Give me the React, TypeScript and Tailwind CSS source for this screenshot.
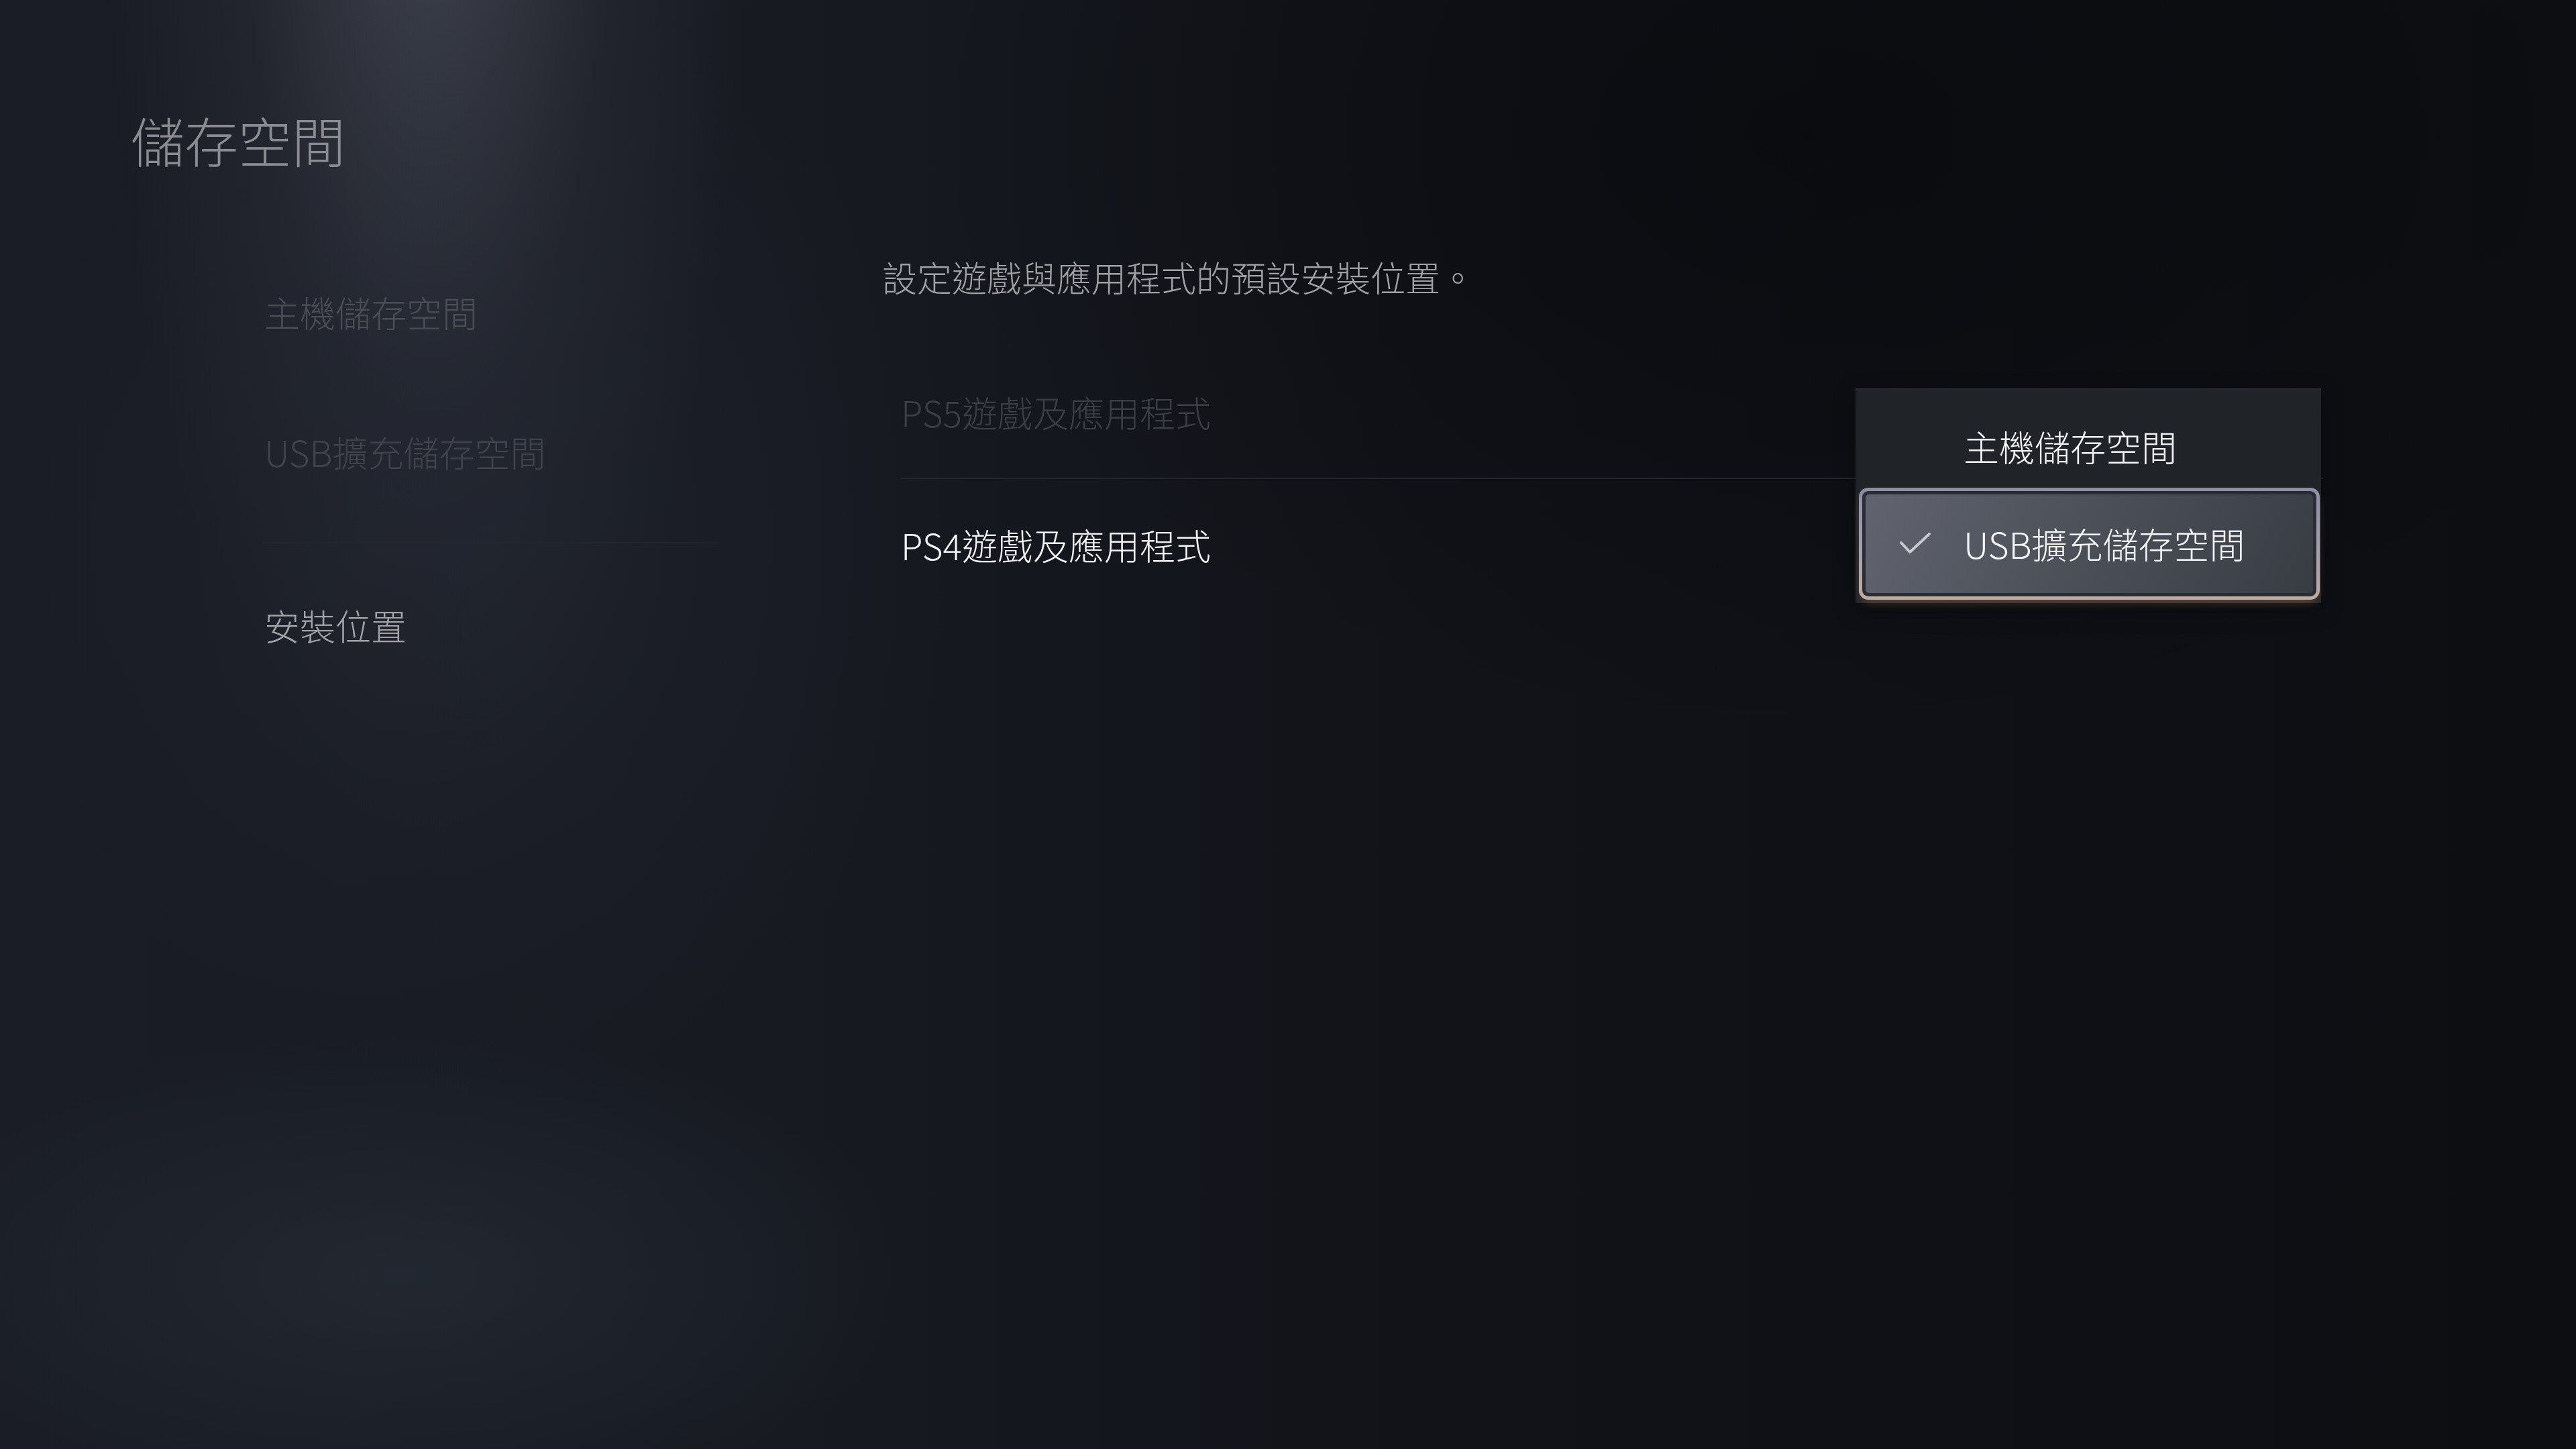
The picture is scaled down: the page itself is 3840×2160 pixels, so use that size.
import React from "react";

const FONT = "font-['Noto_Sans_CJK_TC','Noto_Sans_CJK_SC',sans-serif]";

function Check() {
  return (
    <svg width="48" height="36" viewBox="0 0 48 36" fill="none">
      <polyline
        points="3,16 16,30 45,3"
        stroke="#c9cacf"
        strokeWidth="4"
        strokeLinecap="round"
        strokeLinejoin="round"
      />
    </svg>
  );
}

function Backdrop() {
  return (
    <div className="pointer-events-none absolute inset-0">
      <div className="absolute inset-0 bg-[linear-gradient(90deg,#1a1d25_0%,#171a21_30%,#111319_55%,#0c0e12_100%)]" />
      {/* spotlight falling from the top left */}
      <div className="absolute inset-0 bg-[radial-gradient(ellipse_620px_1900px_at_640px_-240px,rgba(120,124,138,0.42)_0%,rgba(70,74,88,0.2)_45%,rgba(0,0,0,0)_78%)]" />
      <div className="absolute inset-0 bg-[radial-gradient(ellipse_1000px_1200px_at_720px_800px,rgba(40,44,56,0.35)_0%,rgba(0,0,0,0)_70%)]" />
      {/* dark wedge on the upper right */}
      <div className="absolute inset-0 bg-[radial-gradient(ellipse_1900px_1300px_at_2700px_200px,rgba(6,7,10,0.55)_0%,rgba(0,0,0,0)_70%)]" />
      {/* haze near the bottom left */}
      <div className="absolute inset-0 bg-[radial-gradient(ellipse_1100px_520px_at_600px_1900px,rgba(42,50,60,0.55)_0%,rgba(0,0,0,0)_70%)]" />
    </div>
  );
}

function NavItem({ label, tone }: { label: string; tone: string }) {
  return (
    <div className={`flex h-[208px] items-center pl-[3px] text-[53px] leading-none font-light ${tone}`}>
      {label}
    </div>
  );
}

export default function App() {
  return (
    <div className={`relative h-[2160px] w-[3840px] overflow-hidden bg-[#12151b] ${FONT}`}>
      <Backdrop />
      <div className="relative">
        <h1 className="pl-[195px] pt-[167px] text-[80px] leading-none font-light text-[#8b8c91]">
          儲存空間
        </h1>

        <div className="flex">
          {/* left section menu */}
          <nav className="ml-[391px] mt-[114px] w-[681px]">
            <NavItem label="主機儲存空間" tone="text-[#4a4d54]" />
            <NavItem label="USB擴充儲存空間" tone="text-[#40434a]" />
            <div className="mt-[31px] h-[2px] bg-[#23262d]" />
            <div className="mt-[18px]">
              <NavItem label="安裝位置" tone="text-[#a2a3a7]" />
            </div>
          </nav>

          {/* settings content */}
          <section className="ml-[243px] mt-[140px] w-[2148px]">
            <p className="text-[52px] leading-none font-light text-[#a0a1a5]">
              設定遊戲與應用程式的預設安裝位置。
            </p>

            <div className="relative ml-[28px] mt-[77px]">
              <div className="flex h-[196px] items-center text-[53px] leading-none font-light text-[#3b3e45]">
                PS5遊戲及應用程式
              </div>
              <div className="h-[2px] bg-[#21242b]" />
              <div className="flex h-[196px] items-center text-[53px] leading-none font-light text-[#f4f4f5]">
                PS4遊戲及應用程式
              </div>

              {/* open option list */}
              <div className="absolute left-[1423px] top-[63px] w-[694px] border-t-2 border-[#2b2e34] bg-[#202328] pb-[5px] pl-[5px] pr-[2px] shadow-[0_10px_30px_rgba(0,0,0,0.35)]">
                <div className="flex h-[146px] items-center pt-[22px] pl-[156px] text-[53px] leading-none font-light text-[#f4f4f5]">
                  主機儲存空間
                </div>
                <div className="rounded-[14px] bg-[linear-gradient(180deg,#8d8da6_0%,#a39fb0_55%,#c2ab9e_100%)] p-[5px] shadow-[0_8px_16px_-6px_rgba(230,165,115,0.4)]">
                  <div className="rounded-[9px] bg-[#2a2d33] p-[5px]">
                    <div className="flex h-[147px] items-center rounded-[5px] bg-[linear-gradient(115deg,#61646e_0%,#4d515a_45%,#383d44_100%)] pl-[50px] text-[53px] leading-none font-light text-[#f6f6f7]">
                      <Check />
                      <span className="ml-[48px]">USB擴充儲存空間</span>
                    </div>
                  </div>
                </div>
              </div>
            </div>
          </section>
        </div>
      </div>
    </div>
  );
}
